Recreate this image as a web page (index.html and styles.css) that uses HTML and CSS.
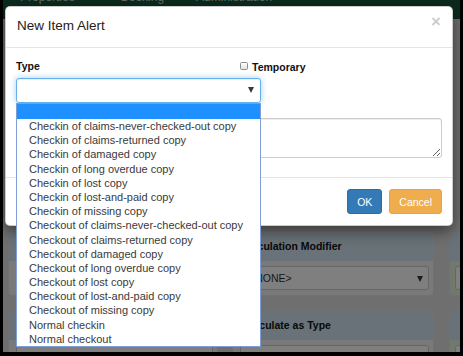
FILE: index.html
```html
<!DOCTYPE html>
<html>

<head>
    <title>New Item Alert</title>
    <link rel="stylesheet" href="styles.css">
</head>

<body>
    <div class="screen">
        <div class="navbar">
            <span class="nav-item">Properties</span>
            <span class="nav-item">Booking</span>
            <span class="nav-item">Administration</span>
        </div>

        <div class="page">
            <div class="col col-left">
                <div class="panel">
                    <div class="panel-heading"></div>
                    <div class="panel-body"><div class="fake-select"></div></div>
                </div>
                <div class="panel">
                    <div class="panel-heading"></div>
                    <div class="panel-body"><div class="fake-select"></div></div>
                </div>
            </div>
            <div class="col col-mid">
                <div class="panel">
                    <div class="panel-heading">Circulation Modifier</div>
                    <div class="panel-body"><div class="fake-select">&lt;NONE&gt;<span class="caret"></span></div></div>
                </div>
                <div class="panel">
                    <div class="panel-heading">Calculate as Type</div>
                    <div class="panel-body"><div class="fake-select">&lt;NONE&gt;<span class="caret"></span></div></div>
                </div>
            </div>
            <div class="col col-right">
                <div class="panel">
                    <div class="panel-heading">Item Type</div>
                    <div class="panel-body green"><div class="fake-select">&lt;NONE&gt;<span class="caret"></span></div></div>
                </div>
                <div class="panel">
                    <div class="panel-heading">Shelving Location</div>
                    <div class="panel-body green"><div class="fake-select">&lt;NONE&gt;<span class="caret"></span></div></div>
                </div>
            </div>
        </div>

        <div class="backdrop"></div>

        <div class="modal">
            <div class="modal-header">
                <h4 class="modal-title">New Item Alert</h4>
                <span class="close">&times;</span>
            </div>
            <div class="modal-body">
                <div class="label-row">
                    <label class="field-label">Type</label>
                    <label class="check-label"><span class="checkbox"></span>Temporary</label>
                </div>
                <div class="select-wrap">
                    <div class="select-box"><span class="caret"></span></div>
                    <ul class="dropdown">
                        <li class="selected"></li>
                        <li>Checkin of claims-never-checked-out copy</li>
                        <li>Checkin of claims-returned copy</li>
                        <li>Checkin of damaged copy</li>
                        <li>Checkin of long overdue copy</li>
                        <li>Checkin of lost copy</li>
                        <li>Checkin of lost-and-paid copy</li>
                        <li>Checkin of missing copy</li>
                        <li>Checkout of claims-never-checked-out copy</li>
                        <li>Checkout of claims-returned copy</li>
                        <li>Checkout of damaged copy</li>
                        <li>Checkout of long overdue copy</li>
                        <li>Checkout of lost copy</li>
                        <li>Checkout of lost-and-paid copy</li>
                        <li>Checkout of missing copy</li>
                        <li>Normal checkin</li>
                        <li>Normal checkout</li>
                    </ul>
                </div>
                <textarea class="note"></textarea>
            </div>
            <div class="modal-footer">
                <button class="btn btn-primary">OK</button>
                <button class="btn btn-warning">Cancel</button>
            </div>
        </div>
    </div>
</body>

</html>
```

FILE: styles.css
```css
body {
    margin: 0;
    width: 463px;
    height: 356px;
    overflow: hidden;
    background: #000;
    font-family: 'Liberation Sans', Arial, sans-serif;
    color: #333;
}

.screen {
    position: relative;
    margin: 0 3px;
    height: 352px;
    overflow: hidden;
    background: #dedede;
}

/* page behind the dialog */
.navbar {
    height: 19px;
    background: #16573a;
    display: flex;
    overflow: hidden;
}

.nav-item {
    font-size: 12px;
    line-height: 14px;
    margin-top: -10px;
    color: #c9d6cf;
}

.nav-item:nth-child(1) { margin-left: 17px; }
.nav-item:nth-child(2) { margin-left: 46px; }
.nav-item:nth-child(3) { margin-left: 32px; }

.page {
    display: flex;
    padding-top: 213px;
}

.col {
    display: flex;
    flex-direction: column;
    gap: 15px;
    flex-shrink: 0;
}

.col-left {
    width: 210px;
    margin-left: 5px;
}

.col-mid {
    width: 202px;
    margin-left: 14px;
}

.col-right {
    width: 200px;
    margin-left: 15px;
}

.panel {
    background: #f2f2f2;
    border: 1px solid #e2e2e2;
    border-radius: 4px;
    overflow: hidden;
}

.panel-heading {
    background: #d2e4f1;
    height: 28px;
    padding: 6px 10px 0;
    box-sizing: border-box;
    font-size: 10.5px;
    line-height: 15px;
    font-weight: bold;
    color: #111;
    white-space: nowrap;
}

.panel-body {
    padding: 5px 4px 5px 7px;
}

.panel-body.green {
    background: #e2f0d9;
    padding-left: 5px;
}

.fake-select {
    position: relative;
    height: 24px;
    box-sizing: border-box;
    border: 1px solid #cccccc;
    border-radius: 3px;
    background: #fff;
    font-size: 10.5px;
    line-height: 22px;
    padding-left: 8px;
    color: #333;
}

.backdrop {
    position: absolute;
    top: 0;
    left: 0;
    right: 0;
    bottom: 0;
    background: rgba(0, 0, 0, 0.5);
}

/* dialog */
.modal {
    position: absolute;
    top: 6px;
    left: 2px;
    width: 448px;
    box-sizing: border-box;
    background: #fff;
    border: 1px solid rgba(0, 0, 0, 0.2);
    border-radius: 5px;
    box-shadow: 0 5px 15px rgba(0, 0, 0, 0.5);
}

.modal-header {
    display: flex;
    justify-content: space-between;
    padding: 10px 11px 12px 11px;
    border-bottom: 1px solid #e5e5e5;
}

.modal-title {
    margin: 0;
    font-size: 13.5px;
    line-height: 18px;
    font-weight: normal;
    color: #222;
}

.close {
    font-size: 17px;
    line-height: 17px;
    font-weight: bold;
    margin-top: -4px;
    color: #000;
    opacity: 0.2;
}

.modal-body {
    padding: 11px 10px 19px;
}

.label-row {
    display: flex;
    align-items: center;
    height: 14px;
    font-size: 10.5px;
    font-weight: bold;
    color: #111;
}

.field-label {
    width: 224px;
}

.check-label {
    display: flex;
    align-items: center;
    padding-top: 1px;
}

.checkbox {
    width: 8px;
    height: 8px;
    box-sizing: border-box;
    border: 1px solid #8e8e8e;
    border-radius: 1.5px;
    background: linear-gradient(#fdfdfd, #e4e4e4);
    margin-right: 4px;
    margin-top: -1px;
}

.select-wrap {
    position: relative;
    width: 245px;
    margin-top: 5px;
}

.select-box {
    position: relative;
    height: 25px;
    box-sizing: border-box;
    border: 1px solid #66afe9;
    border-radius: 3px;
    background: #fff;
    box-shadow: inset 0 1px 1px rgba(0, 0, 0, 0.075), 0 0 6px rgba(102, 175, 233, 0.6);
}

.caret {
    position: absolute;
    right: 6px;
    top: 8px;
    width: 0;
    height: 0;
    border-left: 3px solid transparent;
    border-right: 3px solid transparent;
    border-top: 6px solid #3a3a3a;
}

.fake-select .caret {
    top: 9px;
    right: 5px;
}

.dropdown {
    position: absolute;
    top: 100%;
    left: 0;
    width: 100%;
    box-sizing: border-box;
    margin: 0;
    padding: 0;
    list-style: none;
    background: #fff;
    border: 1px solid #7d9fd4;
    z-index: 3;
}

.dropdown li {
    height: 14.2px;
    line-height: 14.2px;
    padding-left: 12px;
    font-size: 11px;
    color: #3a3a3a;
    white-space: nowrap;
}

.dropdown li.selected {
    height: 15px;
    background: #1e90ff;
}

.note {
    display: block;
    width: 100%;
    height: 40px;
    margin: 15px 0 0;
    box-sizing: border-box;
    border: 1px solid #ccc;
    border-radius: 3px;
    box-shadow: inset 0 1px 1px rgba(0, 0, 0, 0.075);
    font-family: inherit;
}

.modal-footer {
    display: flex;
    justify-content: flex-end;
    gap: 7px;
    padding: 11px 10px;
    border-top: 1px solid #e5e5e5;
}

.btn {
    height: 25px;
    padding: 0 9px;
    border: 1px solid transparent;
    border-radius: 3px;
    font-family: inherit;
    font-size: 10.5px;
    color: #fff;
}

.btn-primary {
    background: #337ab7;
    border-color: #2e6da4;
}

.btn-warning {
    background: #f0ad4e;
    border-color: #eea236;
}
```
